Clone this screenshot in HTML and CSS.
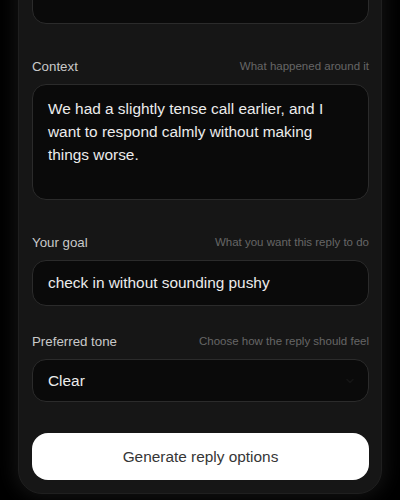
FILE: index.html
```html
<!DOCTYPE html>
<html lang="en">
<head>
    <meta charset="UTF-8">
    <meta name="viewport" content="width=device-width, initial-scale=1.0">
    <title>Reply Helper</title>
    <link rel="stylesheet" href="styles.css">
</head>
<body>
    <form class="card" id="replyForm">
        <!-- message field sits above the scrolled view -->
        <div class="field field-tall">
            <textarea id="message" class="control area area-first" aria-label="Their message"></textarea>
        </div>

        <div class="field field-tall">
            <div class="field-head">
                <label for="context">Context</label>
                <span class="hint">What happened around it</span>
            </div>
            <textarea id="context" class="control area">We had a slightly tense call earlier, and I want to respond calmly without making things worse.</textarea>
        </div>

        <div class="field">
            <div class="field-head">
                <label for="goal">Your goal</label>
                <span class="hint">What you want this reply to do</span>
            </div>
            <input type="text" id="goal" class="control line" value="check in without sounding pushy">
        </div>

        <div class="field">
            <div class="field-head">
                <label for="tone">Preferred tone</label>
                <span class="hint">Choose how the reply should feel</span>
            </div>
            <div class="select-wrap">
                <select id="tone" class="control line select">
                    <option>Clear</option>
                    <option>Warm</option>
                    <option>Casual</option>
                    <option>Formal</option>
                </select>
                <svg class="chevron" width="12" height="12" viewBox="0 0 12 12" fill="none">
                    <path d="M3 4.5 L6 7.5 L9 4.5" stroke="#151515" stroke-width="1.6" stroke-linecap="round" stroke-linejoin="round"/>
                </svg>
            </div>
        </div>

        <button type="button" class="generate">Generate reply options</button>
    </form>
</body>
</html>
```

FILE: styles.css
```css
html, body {
    margin: 0;
    padding: 0;
    background: #000;
    height: 100%;
    overflow: hidden;
}
body {
    font-family: "Liberation Sans", Arial, sans-serif;
    padding: 0 18px;
}
.card {
    margin-top: -97px;
    background: #161616;
    border: 1px solid #1f1f1f;
    border-radius: 24px;
    padding: 20px 12px 13px 13px;
    box-shadow: 0 0 18px 4px rgba(20, 20, 20, 0.9);
    display: flex;
    flex-direction: column;
}
.field + .field {
    margin-top: 26px;
}
.field-tall {
    margin-bottom: 7px;
}
.field-head {
    display: flex;
    justify-content: space-between;
    align-items: center;
    height: 18px;
    margin-bottom: 9px;
}
.field-head label {
    font-size: 13.3px;
    color: #c9c9c9;
}
.hint {
    font-size: 11.5px;
    color: #666;
}
.control {
    display: block;
    box-sizing: border-box;
    width: 100%;
    margin: 0;
    background: #0a0a0a;
    border: 1px solid #2b2b2b;
    border-radius: 14px;
    color: #ececec;
    font-family: inherit;
    font-size: 15.4px;
    outline: none;
}
.area {
    height: 116px;
    padding: 12px 15px;
    line-height: 23px;
    resize: none;
    overflow: hidden;
}
.area-first {
    height: 100px;
}
.line {
    height: 46px;
    padding: 0 15px;
}
.select-wrap {
    position: relative;
}
.select {
    height: 43px;
    appearance: none;
    -webkit-appearance: none;
}
.chevron {
    position: absolute;
    right: 13px;
    top: 16px;
}
.generate {
    margin-top: 31px;
    height: 47px;
    width: 100%;
    border: none;
    border-radius: 16px;
    background: #fff;
    color: #363636;
    font-family: inherit;
    font-size: 15.4px;
    cursor: pointer;
}
.generate:hover {
    background: #f0f0f0;
}
```
